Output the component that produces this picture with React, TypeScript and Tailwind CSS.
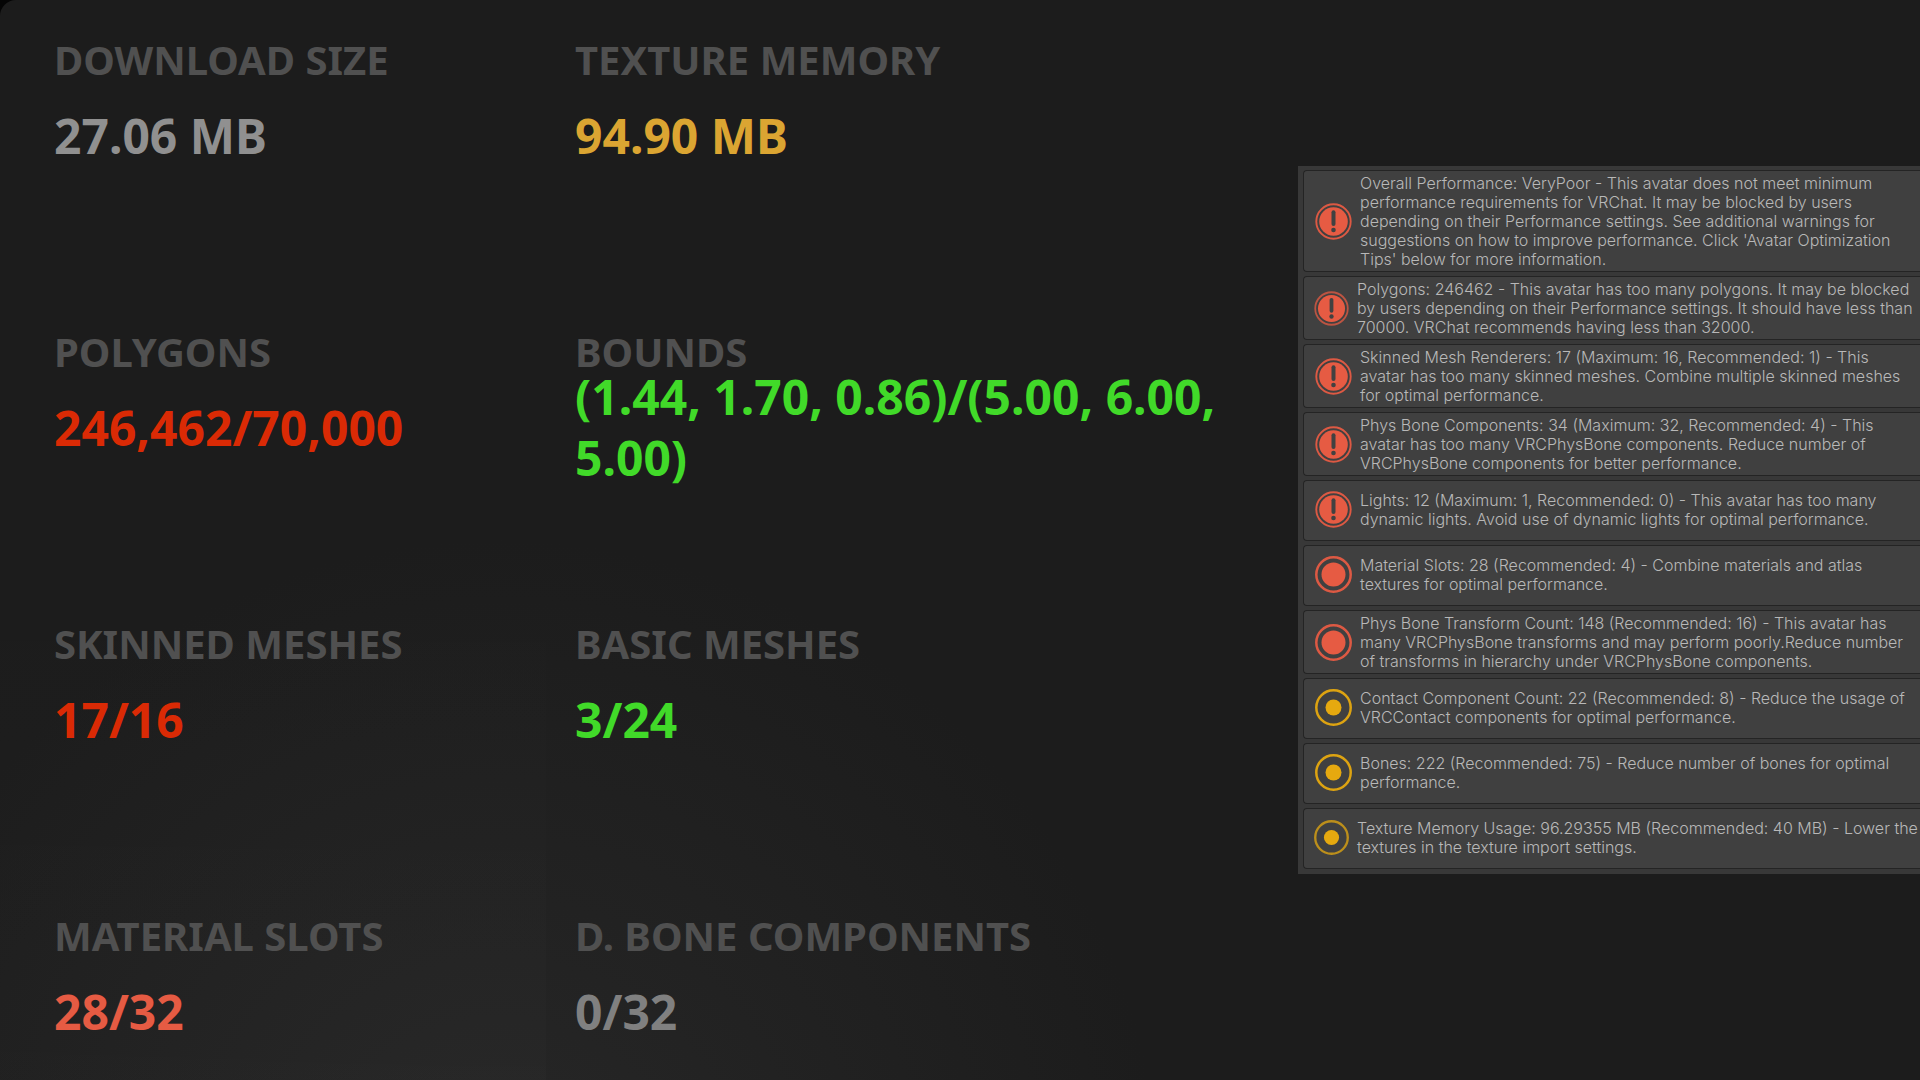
type Tone = "neutral" | "amber" | "red" | "green" | "coral" | "muted";

const toneClass: Record<Tone, string> = {
  neutral: "text-[#909090]",
  amber: "text-[#dba532]",
  red: "text-[#da2a05]",
  green: "text-[#41da29]",
  coral: "text-[#e65b43]",
  muted: "text-[#808080]",
};

const stats: { label: string; value: string; tone: Tone }[] = [
  { label: "DOWNLOAD SIZE", value: "27.06 MB", tone: "neutral" },
  { label: "TEXTURE MEMORY", value: "94.90 MB", tone: "amber" },
  { label: "POLYGONS", value: "246,462/70,000", tone: "red" },
  { label: "BOUNDS", value: "(1.44, 1.70, 0.86)/(5.00, 6.00, 5.00)", tone: "green" },
  { label: "SKINNED MESHES", value: "17/16", tone: "red" },
  { label: "BASIC MESHES", value: "3/24", tone: "green" },
  { label: "MATERIAL SLOTS", value: "28/32", tone: "coral" },
  { label: "D. BONE COMPONENTS", value: "0/32", tone: "muted" },
];

type Level = "verypoor" | "poor" | "medium";

const warnings: { level: Level; lines: string[]; wide?: boolean }[] = [
  {
    level: "verypoor",
    lines: [
      "Overall Performance: VeryPoor - This avatar does not meet minimum",
      "performance requirements for VRChat. It may be blocked by users",
      "depending on their Performance settings. See additional warnings for",
      "suggestions on how to improve performance. Click 'Avatar Optimization",
      "Tips' below for more information.",
    ],
  },
  {
    level: "verypoor",
    wide: true,
    lines: [
      "Polygons: 246462 - This avatar has too many polygons. It may be blocked",
      "by users depending on their Performance settings. It should have less than",
      "70000. VRChat recommends having less than 32000.",
    ],
  },
  {
    level: "verypoor",
    lines: [
      "Skinned Mesh Renderers: 17 (Maximum: 16, Recommended: 1) - This",
      "avatar has too many skinned meshes. Combine multiple skinned meshes",
      "for optimal performance.",
    ],
  },
  {
    level: "verypoor",
    lines: [
      "Phys Bone Components: 34 (Maximum: 32, Recommended: 4) - This",
      "avatar has too many VRCPhysBone components. Reduce number of",
      "VRCPhysBone components for better performance.",
    ],
  },
  {
    level: "verypoor",
    lines: [
      "Lights: 12 (Maximum: 1, Recommended: 0) - This avatar has too many",
      "dynamic lights. Avoid use of dynamic lights for optimal performance.",
    ],
  },
  {
    level: "poor",
    lines: [
      "Material Slots: 28 (Recommended: 4) - Combine materials and atlas",
      "textures for optimal performance.",
    ],
  },
  {
    level: "poor",
    lines: [
      "Phys Bone Transform Count: 148 (Recommended: 16) - This avatar has",
      "many VRCPhysBone transforms and may perform poorly.Reduce number",
      "of transforms in hierarchy under VRCPhysBone components.",
    ],
  },
  {
    level: "medium",
    lines: [
      "Contact Component Count: 22 (Recommended: 8) - Reduce the usage of",
      "VRCContact components for optimal performance.",
    ],
  },
  {
    level: "medium",
    lines: [
      "Bones: 222 (Recommended: 75) - Reduce number of bones for optimal",
      "performance.",
    ],
  },
  {
    level: "medium",
    wide: true,
    lines: [
      "Texture Memory Usage: 96.29355 MB (Recommended: 40 MB) - Lower the",
      "textures in the texture import settings.",
    ],
  },
];

function LevelIcon({ level, small }: { level: Level; small?: boolean }) {
  const color = level === "medium" ? "#e6a90f" : "#e65b43";
  return (
    <svg viewBox="0 0 37 37" className={small ? "size-[35px] shrink-0" : "size-[37px] shrink-0"} aria-hidden="true">
      <circle
        cx="18.5"
        cy="18.5"
        r="17.2"
        fill="none"
        stroke={color}
        strokeOpacity={small ? 0.75 : 0.95}
        strokeWidth={level === "verypoor" ? 1.9 : 2.5}
      />
      {level === "verypoor" && (
        <>
          <circle cx="18.5" cy="18.5" r="14.3" fill={color} />
          <path d="M18.5 9.3v11.6" stroke="#414141" strokeWidth="4" strokeLinecap="round" />
          <circle cx="18.5" cy="27" r="2.3" fill="#414141" />
        </>
      )}
      {level === "poor" && <circle cx="18.5" cy="18.5" r="12" fill={color} />}
      {level === "medium" && <circle cx="18.5" cy="18.5" r="8" fill={color} />}
    </svg>
  );
}

export default function App() {
  return (
    <div className="min-h-screen bg-[#050505]">
      <main className="flex min-h-screen items-start rounded-tl-[16px] bg-[#1c1c1c] bg-[radial-gradient(circle_660px_at_500px_1200px,#272727,#1c1c1c)]">
        <dl className="grid min-h-screen w-[1298px] shrink-0 grid-cols-[546px_1fr] content-start gap-y-[142px] bg-[linear-gradient(to_bottom,transparent_50%,rgba(255,255,255,0.012))] bg-[length:546px_100%] bg-no-repeat pt-[31px] font-['Noto_Sans',sans-serif] font-bold">
          {stats.map((s, i) => (
            <div key={s.label} className={i % 2 ? "pl-[29px]" : "pl-[54px]"}>
              <dt className="text-[40px] leading-[58px] text-[#505050]">{s.label}</dt>
              <dd className={"flex h-[92px] items-center text-[48px] leading-[61px] " + toneClass[s.tone]}>
                {s.value}
              </dd>
            </div>
          ))}
        </dl>
        <ul className="mt-[166px] flex min-w-0 flex-1 flex-col gap-1 bg-[#383838] pt-1 pb-[5px] pl-[5px] font-['Inter',sans-serif] text-[16px] leading-[19px] font-[350] text-[#b8b8b8]">
          {warnings.map((w) => (
            <li
              key={w.lines[0]}
              className={
                "flex min-h-[61px] items-center whitespace-nowrap rounded-l-[4px] border border-r-0 border-[#242424] bg-[#404040] " +
                (w.lines.length > 2 ? "pt-[3px] pb-0.5 " : "pt-0.5 pb-1 ") +
                (w.wide ? "gap-2 pl-2.5" : "gap-2 pl-[11px]")
              }
            >
              <LevelIcon level={w.level} small={w.wide} />
              <p>
                {w.lines.map((line) => (
                  <span key={line} className="block">
                    {line}
                  </span>
                ))}
              </p>
            </li>
          ))}
        </ul>
      </main>
    </div>
  );
}
